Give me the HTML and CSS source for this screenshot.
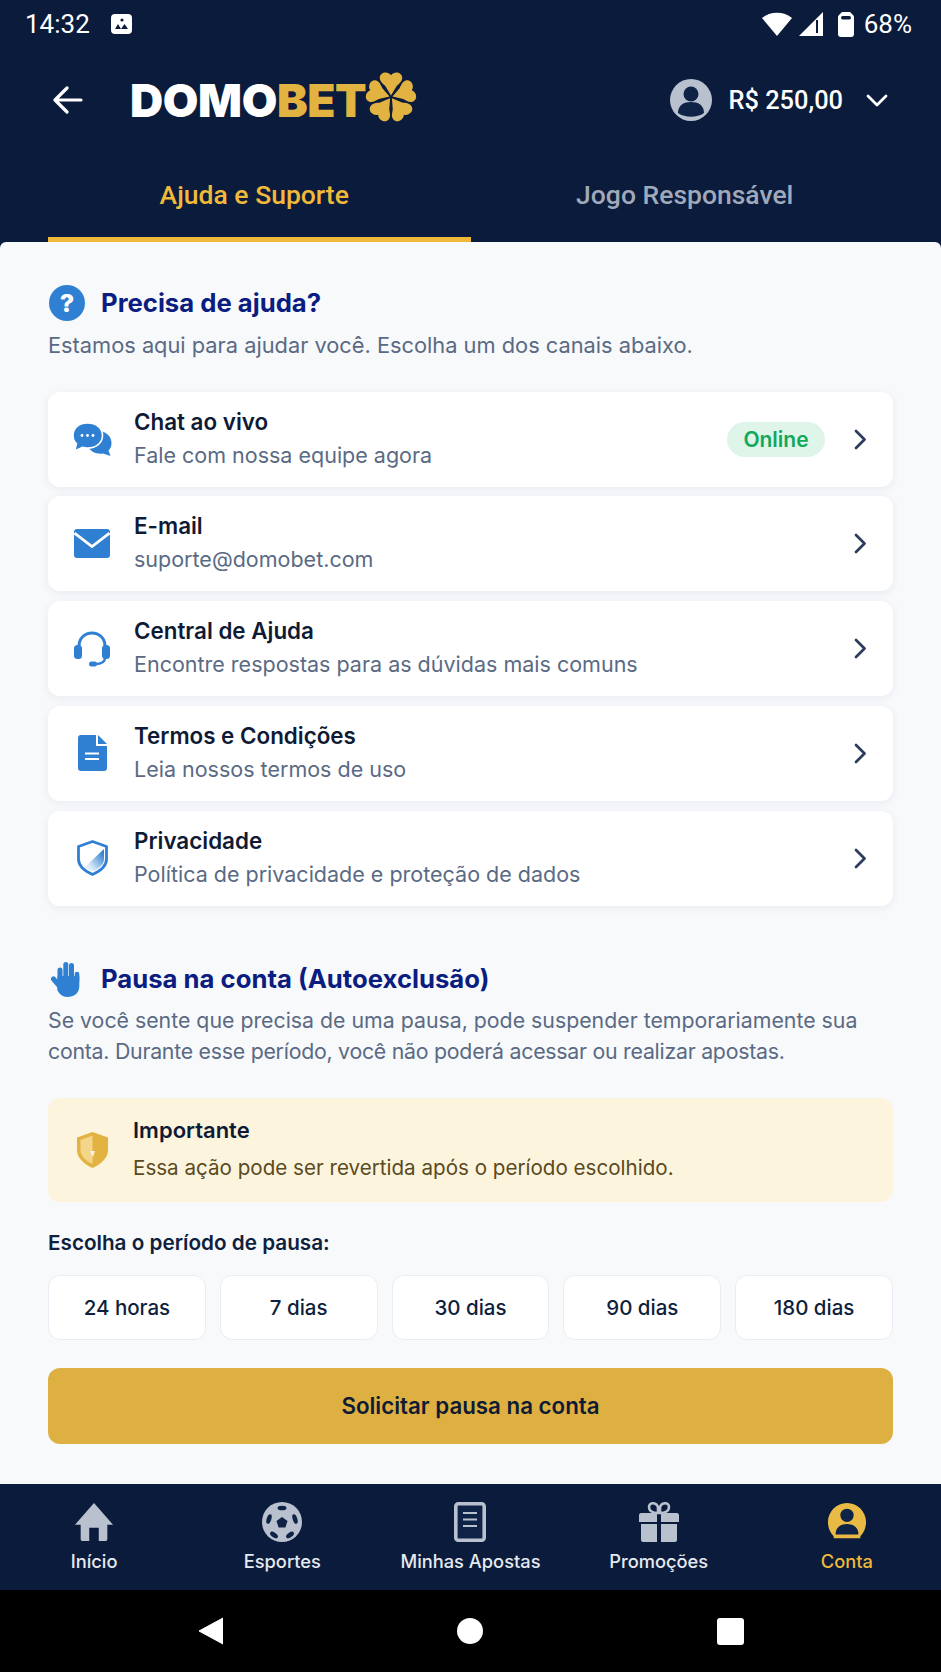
FILE: index.html
```html
<!DOCTYPE html>
<html lang="pt-BR">
<head>
	<meta charset="UTF-8">
	<title>Domobet - Ajuda e Suporte</title>
	<link rel="stylesheet" href="styles.css">
</head>
<body>
<div class="container">
	<div class="statusbar">
		<div class="status-left">
			<span>14:32</span>
			<svg class="st-photo" viewBox="0 0 21 20"><rect width="21" height="20" rx="4" fill="#fff"/><circle cx="11" cy="6" r="1.6" fill="#0a1b3c"/><path d="M4 15l3-5 3 5zM10 15l3.500-5 3.500 5z" fill="#0a1b3c"/></svg>
		</div>
		<div class="status-right">
			<svg class="st-wifi" viewBox="0 0 30 24"><path d="M0 6C8-1 22-1 30 6L15 24z" fill="#fff"/></svg>
			<svg class="st-signal" viewBox="0 0 24 24"><path d="M24 0V24H0z" fill="#fff"/><rect x="17" y="8" width="2" height="13" fill="#0a1b3c"/></svg>
			<svg class="st-batt" viewBox="0 0 16 25"><path d="M4 0h8l3 3c.7.7 1 1.200 1 2v17c0 2-1 3-3 3H3c-2 0-3-1-3-3V5c0-.8.300-1.300 1-2z" fill="#fff"/><rect x="3" y="4" width="10" height="3.500" rx="1.700" fill="#0a1b3c"/></svg>
			<span>68%</span>
		</div>
	</div>

	<header class="topbar">
		<svg class="back" viewBox="0 0 30 28"><path d="M28 14H3M14 2L2 14l12 12" fill="none" stroke="#fff" stroke-width="3.200" stroke-linecap="round" stroke-linejoin="round"/></svg>
		<div class="logo">
			<span class="logo-a">DOMO</span><span class="logo-b">BET</span>
			<svg class="clover" viewBox="-26 -26 52 52">
				<g fill="#e3b341">
					<path id="leaf" d="M0 -1.500L-5.500 -10.500C-8 -13-10.800 -15-10.800 -18.500C-10.800 -23.500-3.500 -25.500 0 -21C3.500 -25.500 10.800 -23.500 10.800 -18.500C10.800 -15 8 -13 5.500 -10.500Z"/>
					<use href="#leaf" transform="rotate(72)"/>
					<use href="#leaf" transform="rotate(144)"/>
					<use href="#leaf" transform="rotate(216)"/>
					<use href="#leaf" transform="rotate(288)"/>
				</g>
			</svg>
		</div>
		<div class="balance">
			<svg class="avatar" viewBox="0 0 42 42"><circle cx="21" cy="21" r="21" fill="#b9c1cf"/><circle cx="21" cy="15" r="7.500" fill="#0f2346"/><path d="M8 34c0-8 6-11 13-11s13 3 13 11c-7 5-19 5-26 0z" fill="#0f2346"/></svg>
			<span class="amount">R$ 250,00</span>
			<svg class="caret" viewBox="0 0 22 13"><path d="M2 2l9 9 9-9" fill="none" stroke="#fff" stroke-width="2.800" stroke-linecap="round" stroke-linejoin="round"/></svg>
		</div>
	</header>

	<nav class="tabs">
		<div class="tab active">Ajuda e Suporte</div>
		<div class="tab">Jogo Responsável</div>
	</nav>

	<main class="sheet">
		<div class="sec-title">
			<div class="qmark">?</div>
			<h2>Precisa de ajuda?</h2>
		</div>
		<p class="sec-text intro">Estamos aqui para ajudar você. Escolha um dos canais abaixo.</p>

		<div class="cards">
			<div class="card">
				<div class="card-icon">
					<svg class="ic-chat" viewBox="0 0 39 33"><path d="M27 8C34 9 38.500 14 38.500 20C38.500 23 37.500 25.500 35.500 27.500L37.500 33L30 30.500C24 31.500 18 29 15 24z" fill="#2f80d2"/><path d="M14.500 0C23 0 29.500 5 29.500 12.500C29.500 20 23 25 14.500 25C12.500 25 11 24.800 9.500 24.300L1.500 28L3.500 20.800C1 18.500 0 15.500 0 12.500C0 5 6 0 14.500 0Z" fill="#2f80d2" stroke="#fff" stroke-width="1.600"/><circle cx="9" cy="12.500" r="1.400" fill="#fff"/><circle cx="14.500" cy="12.500" r="1.400" fill="#fff"/><circle cx="20" cy="12.500" r="1.400" fill="#fff"/></svg>
				</div>
				<div class="card-text">
					<div class="card-title">Chat ao vivo</div>
					<div class="card-sub">Fale com nossa equipe agora</div>
				</div>
				<span class="badge">Online</span>
				<svg class="chev" viewBox="0 0 13 21"><path d="M2 2l8.500 8.500L2 19" fill="none" stroke="#2c3c5e" stroke-width="2.800" stroke-linecap="round" stroke-linejoin="round"/></svg>
			</div>
			<div class="card">
				<div class="card-icon">
					<svg class="ic-mail" viewBox="0 0 36 29"><rect width="36" height="29" rx="3" fill="#2f80d2"/><path d="M0.500 4L18 17.500 35.500 4" fill="none" stroke="#fff" stroke-width="2.800"/></svg>
				</div>
				<div class="card-text">
					<div class="card-title">E-mail</div>
					<div class="card-sub">suporte@domobet.com</div>
				</div>
				<svg class="chev" viewBox="0 0 13 21"><path d="M2 2l8.500 8.500L2 19" fill="none" stroke="#2c3c5e" stroke-width="2.800" stroke-linecap="round" stroke-linejoin="round"/></svg>
			</div>
			<div class="card">
				<div class="card-icon">
					<svg class="ic-head" viewBox="0 0 36 36"><path d="M5 17V15C5 7 11 2 18 2s13 5 13 13v2" fill="none" stroke="#2f80d2" stroke-width="3"/><rect x="0" y="14" width="8" height="14" rx="3.500" fill="#2f80d2"/><rect x="28" y="14" width="8" height="14" rx="3.500" fill="#2f80d2"/><path d="M31 27c0 4-4 6-10 6" fill="none" stroke="#2f80d2" stroke-width="2.400"/><rect x="15" y="30.500" width="8" height="5" rx="2.500" fill="#2f80d2"/></svg>
				</div>
				<div class="card-text">
					<div class="card-title">Central de Ajuda</div>
					<div class="card-sub">Encontre respostas para as dúvidas mais comuns</div>
				</div>
				<svg class="chev" viewBox="0 0 13 21"><path d="M2 2l8.500 8.500L2 19" fill="none" stroke="#2c3c5e" stroke-width="2.800" stroke-linecap="round" stroke-linejoin="round"/></svg>
			</div>
			<div class="card">
				<div class="card-icon">
					<svg class="ic-doc" viewBox="0 0 29 36"><path d="M3 0H18V11H29V33c0 2-1 3-3 3H3c-2 0-3-1-3-3V3C0 1 1 0 3 0z" fill="#2f80d2"/><path d="M20 0l9 9h-9z" fill="#2f80d2"/><path d="M7 18.500h14M7 24h14" stroke="#fff" stroke-width="2"/></svg>
				</div>
				<div class="card-text">
					<div class="card-title">Termos e Condições</div>
					<div class="card-sub">Leia nossos termos de uso</div>
				</div>
				<svg class="chev" viewBox="0 0 13 21"><path d="M2 2l8.500 8.500L2 19" fill="none" stroke="#2c3c5e" stroke-width="2.800" stroke-linecap="round" stroke-linejoin="round"/></svg>
			</div>
			<div class="card">
				<div class="card-icon">
					<svg class="ic-shield" viewBox="0 0 31 36"><defs><linearGradient id="sh" x1="1" y1="0" x2="0" y2="1"><stop offset="0.100" stop-color="#2f80d2"/><stop offset="0.750" stop-color="#dcebf8"/></linearGradient></defs><path d="M15.500 1.500L29.500 6.500V19c0 7-6 12-14 15.500C7.500 31 1.500 26 1.500 19V6.500z" fill="#fff" stroke="#2f80d2" stroke-width="2.800" stroke-linejoin="round"/><path d="M27 9V19c0 5-4 9-11.500 12.500L8 27z" fill="url(#sh)"/></svg>
				</div>
				<div class="card-text">
					<div class="card-title">Privacidade</div>
					<div class="card-sub">Política de privacidade e proteção de dados</div>
				</div>
				<svg class="chev" viewBox="0 0 13 21"><path d="M2 2l8.500 8.500L2 19" fill="none" stroke="#2c3c5e" stroke-width="2.800" stroke-linecap="round" stroke-linejoin="round"/></svg>
			</div>
		</div>

		<div class="sec-title pause-title">
			<svg class="ic-hand" viewBox="0 0 32 36"><g stroke="#2f80d2" stroke-linecap="round" fill="none"><path d="M10 18V9" stroke-width="5"/><path d="M15.800 17V3.500" stroke-width="5"/><path d="M21.500 17V4.500" stroke-width="5"/><path d="M27 20V13" stroke-width="4.600"/><path d="M3.500 18l6 7" stroke-width="5"/></g><path d="M7.500 15H29.300V25c0 7-5 11-12 11-5 0-8-3-10-7z" fill="#2f80d2"/></svg>
			<h2>Pausa na conta (Autoexclusão)</h2>
		</div>
		<p class="sec-text"><span class="line">Se você sente que precisa de uma pausa, pode suspender temporariamente sua</span> <span class="line tight">conta. Durante esse período, você não poderá acessar ou realizar apostas.</span></p>

		<div class="warning">
			<svg class="ic-warn" viewBox="0 0 31 36"><path d="M15.500 0L31 5.500V18c0 8-7 14-15.500 18C7 32 0 26 0 18V5.500z" fill="#e3b341"/><path d="M15.500 3.500V32C9 29 3.500 24 3.500 18V8z" fill="#f3d68c"/><path d="M13 19h5l-2 6z" fill="#fdf4dd"/></svg>
			<div class="warn-body">
				<div class="warn-title">Importante</div>
				<div class="warn-text">Essa ação pode ser revertida após o período escolhido.</div>
			</div>
		</div>

		<div class="label">Escolha o período de pausa:</div>
		<div class="options">
			<div class="option">24 horas</div>
			<div class="option">7 dias</div>
			<div class="option">30 dias</div>
			<div class="option">90 dias</div>
			<div class="option">180 dias</div>
		</div>
		<div class="cta">Solicitar pausa na conta</div>
	</main>

	<footer class="bottomnav">
		<div class="nav-item">
			<svg viewBox="0 0 42 40"><path d="M21 0L41 23H35V38c0 1-1 2-2 2H26V26H16V40H9c-1 0-2-1-2-2V23H1z" fill="#b9c1cf"/></svg>
			<span>Início</span>
		</div>
		<div class="nav-item">
			<svg viewBox="0 0 40 40"><circle cx="20" cy="20" r="20" fill="#b9c1cf"/><g fill="#0f2346"><path d="M20 15l5.500 4-2.100 6.500h-6.800L14.500 19z"/><ellipse cx="20" cy="6" rx="4.500" ry="2.300"/><ellipse cx="7" cy="17" rx="2.300" ry="5" transform="rotate(18 7 17)"/><ellipse cx="33" cy="17" rx="2.300" ry="5" transform="rotate(-18 33 17)"/><ellipse cx="12" cy="33" rx="4.500" ry="2.300" transform="rotate(35 12 33)"/><ellipse cx="28" cy="33" rx="4.500" ry="2.300" transform="rotate(-35 28 33)"/></g></svg>
			<span>Esportes</span>
		</div>
		<div class="nav-item">
			<svg viewBox="0 0 32 40"><rect x="1.800" y="1.800" width="28.400" height="36.400" rx="2.500" fill="#0f2346" stroke="#b9c1cf" stroke-width="3.600"/><path d="M9 11h14M9 17.500h14M9 24h14" stroke="#b9c1cf" stroke-width="2.200"/></svg>
			<span>Minhas Apostas</span>
		</div>
		<div class="nav-item">
			<svg viewBox="0 0 40 40"><path d="M19 11C14 11 10 10 10 5c0-5 7-5 9 0zM21 11c5 0 9-1 9-6 0-5-7-5-9 0z" fill="none" stroke="#b9c1cf" stroke-width="2.600"/><path d="M2 11h16v9H0v-7c0-1 1-2 2-2zM22 11h16c1 0 2 1 2 2v7H22zM2 22h16v18H4c-1 0-2-1-2-2zM22 22h16v16c0 1-1 2-2 2H22z" fill="#b9c1cf"/></svg>
			<span>Promoções</span>
		</div>
		<div class="nav-item current">
			<svg viewBox="0 0 42 40"><path d="M21 0C32 0 41 9 41 20C41 27 38 32 35 35V37H7V35C4 32 1 27 1 20C1 9 10 0 21 0Z" fill="#e9bb45"/><circle cx="21" cy="13" r="7" fill="#0f2346"/><path d="M9 33c0-7 5-11 12-11s12 4 12 11z" fill="#0f2346"/></svg>
			<span>Conta</span>
		</div>
	</footer>

	<div class="sysnav">
		<svg class="sys-back" viewBox="0 0 25 28"><path d="M25 1V27L1 14z" fill="#fff" stroke="#fff" stroke-linejoin="round"/></svg>
		<div class="sys-home"></div>
		<div class="sys-recent"></div>
	</div>
</div>
</body>
</html>
```

FILE: styles.css
```css
*{
	margin:0;
	padding:0;
	box-sizing:border-box;
}
html,body{
	width:100%;
	height:100%;
	overflow:hidden;
}
body{
	font-family:Inter,"Noto Sans",sans-serif;
	background:#000;
}
svg{
	display:block;
	flex:none;
}
.container{
	width:941px;
	height:1672px;
	display:flex;
	flex-direction:column;
	background:#0a1b3c;
}

/* status bar */
.statusbar{
	height:48px;
	padding:0 29px 0 25px;
	display:flex;
	align-items:center;
	justify-content:space-between;
	color:#fff;
	font-family:Roboto,sans-serif;
	font-size:26px;
}
.status-left,.status-right{
	display:flex;
	align-items:center;
}
.st-photo{
	width:21px;
	height:20px;
	margin-left:21px;
}
.st-wifi{
	width:30px;
	height:24px;
	margin-right:1px;
}
.st-signal{
	width:24px;
	height:24px;
	margin-left:6px;
}
.st-batt{
	width:16px;
	height:25px;
	margin-left:15px;
	margin-right:10px;
}

/* header */
.topbar{
	height:104px;
	padding:0 53px;
	display:flex;
	align-items:center;
}
.back{
	width:30px;
	height:28px;
}
.logo{
	display:flex;
	align-items:center;
	margin-left:47px;
	font-weight:900;
	font-size:46px;
	letter-spacing:-.4px;
}
.logo-a{
	color:#fff;
}
.logo-b{
	color:#e3b341;
}
.clover{
	width:54px;
	height:54px;
	margin:-6px 0 0 -2px;
}
.balance{
	margin-left:auto;
	display:flex;
	align-items:center;
	color:#fff;
}
.avatar{
	width:42px;
	height:42px;
}
.amount{
	font-family:Roboto,sans-serif;
	font-weight:500;
	font-size:25.4px;
	margin-left:16px;
}
.caret{
	width:22px;
	height:13px;
	margin-left:23px;
}

.tabs{
	height:90px;
	padding:0 48px;
	display:flex;
}
.tab{
	flex:0 0 50%;
	display:flex;
	align-items:center;
	justify-content:center;
	padding-left:6px;
	font-family:Roboto,sans-serif;
	font-weight:500;
	font-size:26.5px;
	color:#a0a9b9;
	border-bottom:5px solid transparent;
}
.tab.active{
	padding:0 10px 0 0;
	color:#f0b93a;
	border-bottom-color:#f0b93a;
}

/* content */
.sheet{
	flex:1;
	padding:44px 48px 0;
	background:#f7f9fb;
	border-radius:6px 6px 0 0;
	overflow:hidden;
}
.sec-title{
	display:flex;
	align-items:center;
	height:34px;
}
.sec-title h2{
	margin-left:17px;
	font-size:25.7px;
	line-height:34px;
	font-weight:700;
	color:#0b1d80;
}
.qmark{
	width:36px;
	height:36px;
	margin:0 -1px 0 1px;
	border-radius:50%;
	background:#2f80d2;
	color:#fff;
	font-weight:800;
	font-size:25px;
	line-height:36px;
	text-align:center;
}
.ic-hand{
	width:32px;
	height:36px;
	margin-left:2px;
	margin-right:2px;
}
.sec-text{
	margin-top:9px;
	font-size:21.3px;
	line-height:31.5px;
	color:#5a6a84;
}
.sec-text.intro{
	margin-top:10px;
	font-size:21.8px;
}
.line{
	display:block;
}
.line.tight{
	letter-spacing:-.25px;
}
.cards{
	margin-top:30px;
	display:flex;
	flex-direction:column;
	gap:9.75px;
}
.card{
	height:95px;
	padding:0 26px 0 18px;
	display:flex;
	align-items:center;
	background:#fff;
	border-radius:12px;
	box-shadow:0 2px 8px rgba(40,60,100,.07);
}
.card-icon{
	width:52px;
	display:flex;
	justify-content:center;
	margin-right:16px;
}
.ic-chat{
	width:39px;
	height:33px;
}
.ic-mail{
	width:36px;
	height:29px;
}
.ic-head{
	width:36px;
	height:36px;
}
.ic-doc{
	width:29px;
	height:36px;
}
.ic-shield{
	width:31px;
	height:36px;
}
.card-text{
	flex:1;
	padding-bottom:2px;
}
.card-title{
	font-size:22.4px;
	line-height:33px;
	font-weight:600;
	color:#0f1b35;
}
.card-sub{
	font-size:21.5px;
	line-height:34px;
	color:#5a6a84;
}
.badge{
	width:98px;
	height:35px;
	margin-right:29px;
	border-radius:18px;
	background:#dff5ea;
	color:#12a85a;
	font-size:21px;
	font-weight:600;
	line-height:35px;
	text-align:center;
}
.chev{
	width:13px;
	height:21px;
}
.pause-title{
	margin-top:56px;
}
.warning{
	height:104px;
	margin-top:30px;
	padding:0 29px;
	display:flex;
	align-items:center;
	gap:25px;
	background:#fdf4dd;
	border-radius:12px;
}
.ic-warn{
	width:31px;
	height:36px;
}
.warn-body{
	padding-bottom:1px;
}
.warn-title{
	font-size:22px;
	line-height:38px;
	font-weight:600;
	color:#0f1b35;
}
.warn-text{
	font-size:20.6px;
	line-height:38px;
	color:#5a4a1f;
}
.label{
	margin-top:26px;
	font-size:20.7px;
	line-height:30px;
	font-weight:600;
	color:#0f1f3d;
}
.options{
	margin-top:17px;
	display:grid;
	grid-template-columns:repeat(5,1fr);
	gap:14px;
}
.option{
	height:65px;
	background:#fff;
	border:1px solid #e9edf3;
	border-radius:12px;
	display:flex;
	align-items:center;
	justify-content:center;
	font-size:20.5px;
	font-weight:500;
	color:#0f1f3d;
}
.cta{
	height:76px;
	margin-top:28px;
	background:#deb041;
	border-radius:12px;
	display:flex;
	align-items:center;
	justify-content:center;
	font-size:22.3px;
	font-weight:600;
	color:#0f1b35;
}

/* bottom nav */
.bottomnav{
	height:106px;
	display:grid;
	grid-template-columns:repeat(5,1fr);
	background:#0a1b3c;
}
.nav-item{
	display:flex;
	flex-direction:column;
	align-items:center;
	padding-top:18px;
	color:#e6e9ef;
	font-size:18.3px;
	font-weight:500;
}
.nav-item svg{
	width:40px;
	height:40px;
}
.nav-item span{
	margin-top:7px;
	line-height:24px;
}
.nav-item.current{
	color:#f0b93a;
}
.sysnav{
	height:82px;
	background:#000;
	display:flex;
	align-items:center;
	justify-content:center;
	gap:234px;
}
.sys-back{
	width:25px;
	height:28px;
}
.sys-home{
	width:26px;
	height:26px;
	border-radius:50%;
	background:#fff;
}
.sys-recent{
	width:27px;
	height:27px;
	border-radius:3px;
	background:#fff;
}
```
